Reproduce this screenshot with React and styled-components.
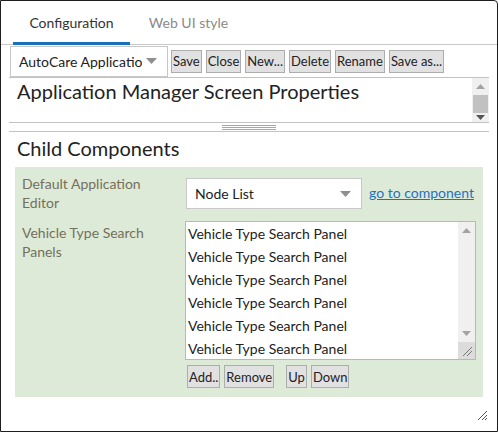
import React from 'react';
import styled, { createGlobalStyle } from 'styled-components';

const Global = createGlobalStyle`
    html, body {
        margin: 0;
        padding: 0;
        background: #fff;
    }
    body {
        font-family: "Segoe UI", Lato, "Liberation Sans", sans-serif;
        color: #222;
    }
`;

const Frame = styled.div`
    position: relative;
    width: 498px;
    height: 432px;
    box-sizing: border-box;
    border: 1px solid #1e1e1e;
    border-top-right-radius: 4px;
    background: #fff;
    overflow: hidden;
`;

const Tabs = styled.div`
    display: flex;
    height: 43px;
    padding-left: 12px;
    border-bottom: 1px solid #c8c8c8;
`;

const Tab = styled.div`
    width: 117px;
    display: flex;
    align-items: center;
    justify-content: center;
    padding-top: 1px;
    font-size: 14px;
    color: ${(p) => (p.$active ? '#333' : '#8a8a8a')};
    box-sizing: border-box;
    border-bottom: 3px solid ${(p) => (p.$active ? '#1a70b8' : 'transparent')};
    margin-bottom: -1px;
`;

const Body = styled.div`
    margin: 0 8px 0 8px;
`;

const Toolbar = styled.div`
    display: flex;
    align-items: center;
    gap: 4px;
    height: 32px;
    padding-left: 1px;
    border-bottom: 1px solid #c3c3c3;
`;

const Select = styled.div`
    display: flex;
    align-items: center;
    justify-content: space-between;
    box-sizing: border-box;
    width: ${(p) => p.$width}px;
    height: 31px;
    padding: 0 10px 0 8px;
    margin-top: ${(p) => p.$mt || 0}px;
    border: 1px solid #c8c8c8;
    background: #fff;
    font-size: 14px;
    color: #222;
    margin-right: ${(p) => p.$mr || 0}px;
    flex-shrink: 0;
    span {
        overflow: hidden;
        white-space: nowrap;
    }
`;

const Caret = () => (
    <svg width="11" height="6" viewBox="0 0 11 6">
        <path d="M0 0 L11 0 L5.5 6 Z" fill="#8f8f8f" />
    </svg>
);

const Button = styled.button`
    height: 23px;
    padding: 0 1px;
    margin: 0;
    margin-left: ${(p) => p.$ml || 0}px;
    border: 1px solid #adadad;
    background: #e1e1e1;
    font-family: inherit;
    font-size: 13px;
    color: #222;
    line-height: 20px;
`;

const TitleArea = styled.div`
    display: flex;
    height: 44px;
    border-bottom: 1px solid #c3c3c3;
`;

const Title = styled.h2`
    flex: 1;
    margin: 0;
    padding: 0 0 0 8px;
    font-size: 20px;
    font-weight: normal;
    line-height: 27px;
    color: #222;
`;

const ScrollBar = styled.div`
    width: 17px;
    background: #f0f0f0;
    display: flex;
    flex-direction: column;
    align-items: center;
`;

const Arrow = styled.div`
    display: flex;
    justify-content: center;
    align-items: center;
    height: ${(p) => p.$h}px;
`;

const Thumb = styled.div`
    width: 15px;
    height: ${(p) => p.$h}px;
    background: #c1c1c1;
`;

const Splitter = styled.div`
    height: 8px;
    display: flex;
    flex-direction: column;
    align-items: center;
    justify-content: center;
    gap: 1px;
    border-bottom: 1px solid #c3c3c3;
    i {
        display: block;
        width: 54px;
        height: 1px;
        background: #a8a8a8;
    }
`;

const SectionTitle = styled.h3`
    margin: 0;
    padding: 2px 0 0 8px;
    font-size: 20px;
    font-weight: normal;
    line-height: 28px;
    color: #222;
`;

const Panel = styled.div`
    margin: 5px 14px 0 14px;
    background: #deead8;
    padding: 7px 7px 9px 7px;
    display: flex;
    flex-direction: column;
    gap: 9px;
`;

const Row = styled.div`
    display: flex;
    align-items: flex-start;
`;

const Label = styled.div`
    width: 150px;
    margin-right: 14px;
    font-size: 14px;
    line-height: 19px;
    padding-top: ${(p) => p.$pt || 0}px;
    color: #74705a;
`;

const Link = styled.a`
    font-size: 14px;
    color: #1f72c2;
    text-decoration: underline;
    margin-top: 10px;
    margin-left: 7px;
    white-space: nowrap;
`;

const Field = styled.div`
    display: flex;
    flex-direction: column;
    gap: 5px;
`;

const ListBox = styled.div`
    display: flex;
    width: 291px;
    height: 139px;
    box-sizing: border-box;
    border: 1px solid #b8b8b8;
    background: #fff;
`;

const Items = styled.div`
    flex: 1;
    overflow: hidden;
    padding-left: 2px;
`;

const Item = styled.div`
    height: 23px;
    line-height: 23px;
    font-size: 14px;
    white-space: nowrap;
    color: #222;
`;

const Buttons = styled.div`
    display: flex;
    gap: 4px;
    padding-left: 2px;
`;

const Grip = styled.svg`
    position: absolute;
    right: ${(p) => p.$r}px;
    bottom: ${(p) => p.$b}px;
`;

const Up = () => (
    <svg width="9" height="5" viewBox="0 0 9 5">
        <path d="M0 5 L9 5 L4.5 0 Z" fill="#a3a3a3" />
    </svg>
);
const Down = ({ c = '#a3a3a3' }) => (
    <svg width="9" height="5" viewBox="0 0 9 5">
        <path d="M0 0 L9 0 L4.5 5 Z" fill={c} />
    </svg>
);

const ResizeLines = ({ color = '#8a8a8a' }) => (
    <>
        <line x1="10" y1="1" x2="1" y2="10" stroke={color} strokeWidth="1" />
        <line x1="10" y1="5" x2="5" y2="10" stroke={color} strokeWidth="1" />
    </>
);

const panels = Array.from({ length: 6 }, () => 'Vehicle Type Search Panel');

export default function App() {
    return (
        <>
            <Global />
            <Frame>
                <Tabs>
                    <Tab $active>Configuration</Tab>
                    <Tab>Web UI style</Tab>
                </Tabs>
                <Body>
                    <Toolbar>
                        <Select $width={158} $mr={-1}>
                            <span>AutoCare Applicatio</span>
                            <Caret />
                        </Select>
                        <Button>Save</Button>
                        <Button>Close</Button>
                        <Button>New...</Button>
                        <Button>Delete</Button>
                        <Button>Rename</Button>
                        <Button>Save as...</Button>
                    </Toolbar>
                    <TitleArea>
                        <Title>Application Manager Screen Properties</Title>
                        <ScrollBar>
                            <Arrow $h={17}>
                                <Up />
                            </Arrow>
                            <Thumb $h={18} />
                            <Arrow $h={8}>
                                <Down c="#555" />
                            </Arrow>
                        </ScrollBar>
                    </TitleArea>
                    <Splitter>
                        <i />
                        <i />
                        <i />
                    </Splitter>
                    <SectionTitle>Child Components</SectionTitle>
                </Body>
                <Panel>
                    <Row>
                        <Label>Default Application Editor</Label>
                        <Select $width={176} $mt={4}>
                            <span>Node List</span>
                            <Caret />
                        </Select>
                        <Link href="#">go to component</Link>
                    </Row>
                    <Row>
                        <Label $pt={2}>Vehicle Type Search Panels</Label>
                        <Field>
                            <ListBox>
                                <Items>
                                    {panels.map((p, i) => (
                                        <Item key={i}>{p}</Item>
                                    ))}
                                </Items>
                                <ScrollBar>
                                    <Arrow $h={17}>
                                        <Up />
                                    </Arrow>
                                    <div style={{ flex: 1 }} />
                                    <Arrow $h={17}>
                                        <Down />
                                    </Arrow>
                                    <svg width="17" height="17" viewBox="0 0 17 17">
                                        <rect width="17" height="17" fill="#dcdcdc" />
                                        <g transform="translate(4 4)">
                                            <ResizeLines color="#777" />
                                        </g>
                                    </svg>
                                </ScrollBar>
                            </ListBox>
                            <Buttons>
                                <Button>Add..</Button>
                                <Button>Remove</Button>
                                <Button $ml={8}>Up</Button>
                                <Button>Down</Button>
                            </Buttons>
                        </Field>
                    </Row>
                </Panel>
                <Grip $r={8} $b={9} width="12" height="12" viewBox="0 0 12 12">
                    <ResizeLines color="#555" />
                    <line x1="10" y1="8" x2="8" y2="10" stroke="#555" />
                </Grip>
            </Frame>
        </>
    );
}
